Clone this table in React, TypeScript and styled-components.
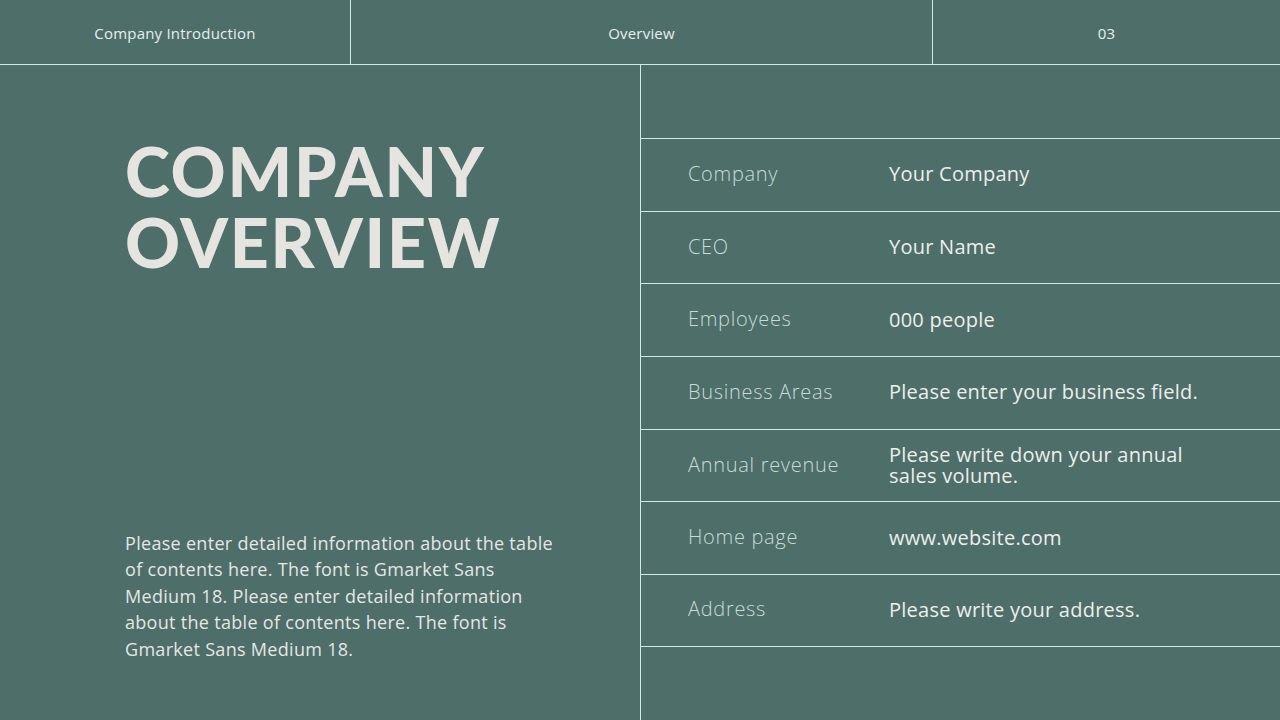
import styled, { createGlobalStyle } from 'styled-components';

const GlobalStyle = createGlobalStyle`
  html, body {
    margin: 0;
    padding: 0;
    background: #4d6e69;
  }
  body {
    font-family: "Open Sans", "Noto Sans", sans-serif;
  }
`;

const LINE = '#d3e9e4';

const Slide = styled.div`
  width: 1280px;
  height: 720px;
  background: #4d6e69;
  color: #e8e8e4;
  display: flex;
  flex-direction: column;
  overflow: hidden;
`;

const Header = styled.header`
  display: grid;
  grid-template-columns: 350px 582px 1fr;
  height: 65px;
  border-bottom: 1px solid ${LINE};
  box-sizing: border-box;
`;

const HeaderCell = styled.div<{ $divider?: boolean }>`
  display: flex;
  align-items: center;
  justify-content: center;
  font-size: 15px;
  letter-spacing: 0.2px;
  color: #e6eeec;
  border-left: ${(p) => (p.$divider ? `1px solid ${LINE}` : 'none')};
  padding-top: 1px;
`;

const Body = styled.main`
  flex: 1;
  display: grid;
  grid-template-columns: 640px 1fr;
`;

const Intro = styled.section`
  display: flex;
  flex-direction: column;
  justify-content: space-between;
  padding: 70px 0 58px 125px;
`;

const Title = styled.h1`
  margin: 0;
  font-family: Lato, sans-serif;
  font-weight: 900;
  font-size: 68px;
  line-height: 71px;
  letter-spacing: 1.8px;
  color: #e6e4e1;
`;

const Description = styled.p`
  margin: 0;
  width: 437px;
  font-size: 18px;
  line-height: 26.4px;
  letter-spacing: 0.3px;
  color: #e6e6e2;
`;

const Table = styled.section`
  border-left: 1px solid ${LINE};
  padding-top: 73px;
`;

const Row = styled.div<{ $last?: boolean }>`
  display: grid;
  grid-template-columns: 201px 1fr;
  align-items: center;
  height: 72.7px;
  box-sizing: border-box;
  padding-left: 47px;
  border-top: 1px solid ${LINE};
  border-bottom: ${(p) => (p.$last ? `1px solid ${LINE}` : 'none')};
`;

const Label = styled.div`
  font-size: 20px;
  font-weight: 300;
  letter-spacing: 0.7px;
  color: #c9dbd7;
  margin-top: -3px;
`;

const Value = styled.div`
  font-size: 20px;
  line-height: 21px;
  letter-spacing: 0.25px;
  color: #eeeeea;
  padding-right: 70px;
  margin-top: -2px;
`;

const rows = [
  { label: 'Company', value: 'Your Company' },
  { label: 'CEO', value: 'Your Name' },
  { label: 'Employees', value: '000 people' },
  { label: 'Business Areas', value: 'Please enter your business field.' },
  { label: 'Annual revenue', value: 'Please write down your annual sales volume.' },
  { label: 'Home page', value: 'www.website.com' },
  { label: 'Address', value: 'Please write your address.' },
];

const App = () => {
  return (
    <>
      <GlobalStyle />
      <Slide>
        <Header>
          <HeaderCell>Company Introduction</HeaderCell>
          <HeaderCell $divider>Overview</HeaderCell>
          <HeaderCell $divider>03</HeaderCell>
        </Header>
        <Body>
          <Intro>
            <Title>
              COMPANY
              <br />
              OVERVIEW
            </Title>
            <Description>
              Please enter detailed information about the table of contents here. The font is Gmarket Sans
              Medium 18. Please enter detailed information about the table of contents here. The font is
              Gmarket Sans Medium 18.
            </Description>
          </Intro>
          <Table>
            {rows.map((row, i) => (
              <Row key={row.label} $last={i === rows.length - 1}>
                <Label>{row.label}</Label>
                <Value>{row.value}</Value>
              </Row>
            ))}
          </Table>
        </Body>
      </Slide>
    </>
  );
};

export default App;
